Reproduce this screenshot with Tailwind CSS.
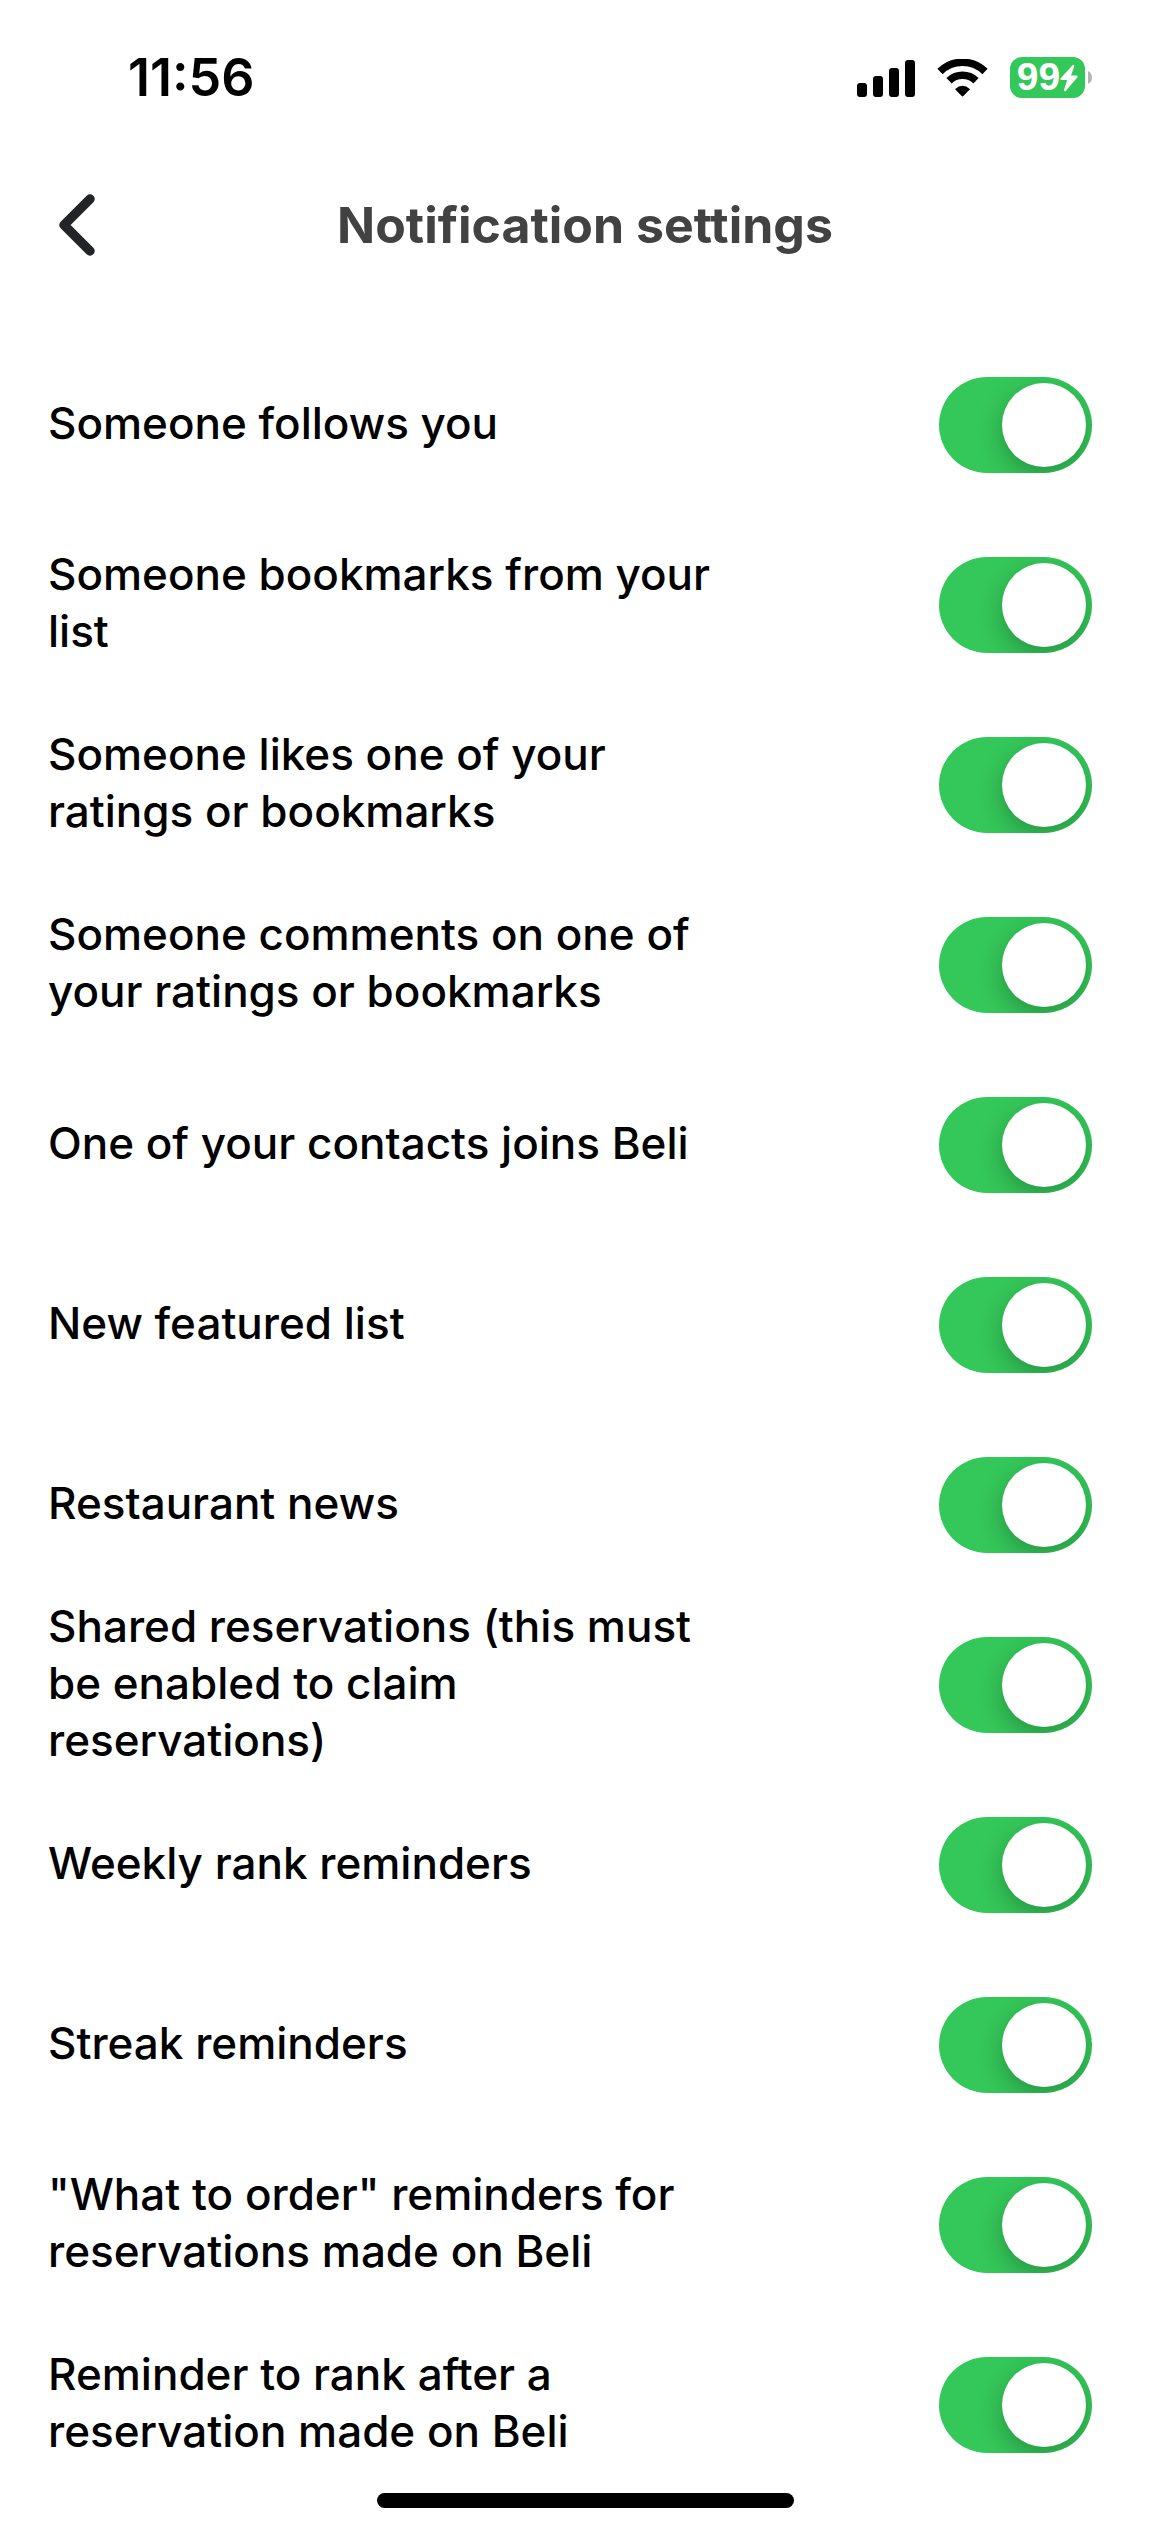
<!DOCTYPE html>
<html lang="en">
<head>
<meta charset="utf-8">
<meta name="viewport" content="width=device-width, initial-scale=1">
<title>Notification settings</title>
<script src="https://cdn.jsdelivr.net/npm/@tailwindcss/browser@4"></script>
</head>
<body class="flex min-h-screen flex-col bg-white font-[Inter,sans-serif] text-black">
  <div class="flex h-[155px] items-center justify-between pr-[78px] pl-32">
    <time class="text-[52px] leading-none font-semibold">11:56</time>
    <div class="flex items-center gap-[22px]">
      <svg class="h-[38px] w-[58px]" viewBox="0 0 58 38" role="img" aria-label="Signal">
        <rect x="0" y="24" width="10" height="14" rx="3"/>
        <rect x="16" y="17" width="10" height="21" rx="3"/>
        <rect x="32" y="9" width="10" height="29" rx="3"/>
        <rect x="48" y="1" width="10" height="37" rx="3"/>
      </svg>
      <svg class="h-[38px] w-[51px]" viewBox="0 0 51 38" role="img" aria-label="Wi-Fi">
        <path d="M3 12.500A32 32 0 0 1 48 12.500M12 21.800A19.500 19.500 0 0 1 39 21.800" fill="none" stroke="#000" stroke-width="7.500"/>
        <path d="M18 30.200Q25.500 23.500 33 30.200L26.300 37.100Q25.500 37.900 24.700 37.100Z"/>
      </svg>
      <div class="flex items-center gap-[3px]">
        <div class="flex h-[41px] w-[75px] items-center justify-center rounded-[12px] bg-[#34c759] text-white">
          <span class="pb-0.5 text-[39px] leading-none font-bold font-['Liberation_Sans',sans-serif]">99</span>
          <svg class="h-7 w-[18px]" viewBox="0 0 18 28" fill="#fff" aria-hidden="true">
            <path d="M12.500 1.200L.7 14.200Q-.2 15.700 1.500 15.900H7.200L4 25.800Q4 28 5.800 27L17.400 13.200Q18.200 11.700 16.500 11.500H11L14.300 2.200Q14.200 0 12.500 1.200Z"/>
          </svg>
        </div>
        <svg class="h-[13px] w-1" viewBox="0 0 4 13" fill="#b3b3b3" aria-hidden="true"><path d="M0 0Q4 2 4 6.500T0 13Z"/></svg>
      </div>
    </div>
  </div>

  <header class="grid h-[140px] grid-cols-[1fr_auto_1fr] items-center px-12">
    <button type="button" aria-label="Back" class="flex w-[58px] justify-center">
      <svg class="h-16 w-10" viewBox="0 0 40 64" fill="none" stroke="#222428" stroke-width="9.500" stroke-linecap="round" stroke-linejoin="round"><path d="M33 6L7 32L33 58"/></svg>
    </button>
    <h1 class="text-[50px] leading-none font-bold text-[#424242]">Notification settings</h1>
  </header>

  <main class="pt-10 pb-[37px]">
    <ul id="settings"></ul>
  </main>

  <div class="fixed inset-x-0 bottom-6 mx-auto h-[15px] w-[417px] rounded-full bg-black"></div>

  <template id="row">
    <li>
      <label class="flex h-[180px] items-center justify-between pr-[78px] pl-12">
        <span class="w-[670px] pb-1 text-[44px] leading-[57px] font-medium"></span>
        <input type="checkbox" role="switch" checked class="flex h-24 w-[153px] shrink-0 appearance-none items-center overflow-hidden rounded-full bg-[#e9e9ea] px-1.5 before:size-[84px] before:rounded-full before:bg-white before:shadow-[0_9px_24px_rgba(0,0,0,0.25)] checked:justify-end checked:bg-[#34c759]">
      </label>
    </li>
  </template>
  <script>
    const labels = [
      'Someone follows you',
      'Someone bookmarks from your list',
      'Someone likes one of your ratings or bookmarks',
      'Someone comments on one of your ratings or bookmarks',
      'One of your contacts joins Beli',
      'New featured list',
      'Restaurant news',
      'Shared reservations (this must be enabled to claim reservations)',
      'Weekly rank reminders',
      'Streak reminders',
      '"What to order" reminders for reservations made on Beli',
      'Reminder to rank after a reservation made on Beli'
    ];
    const list = document.getElementById('settings');
    const row = document.getElementById('row');
    for (const text of labels) {
      const item = row.content.cloneNode(true);
      item.querySelector('span').textContent = text;
      list.append(item);
    }
  </script>
</body>
</html>
